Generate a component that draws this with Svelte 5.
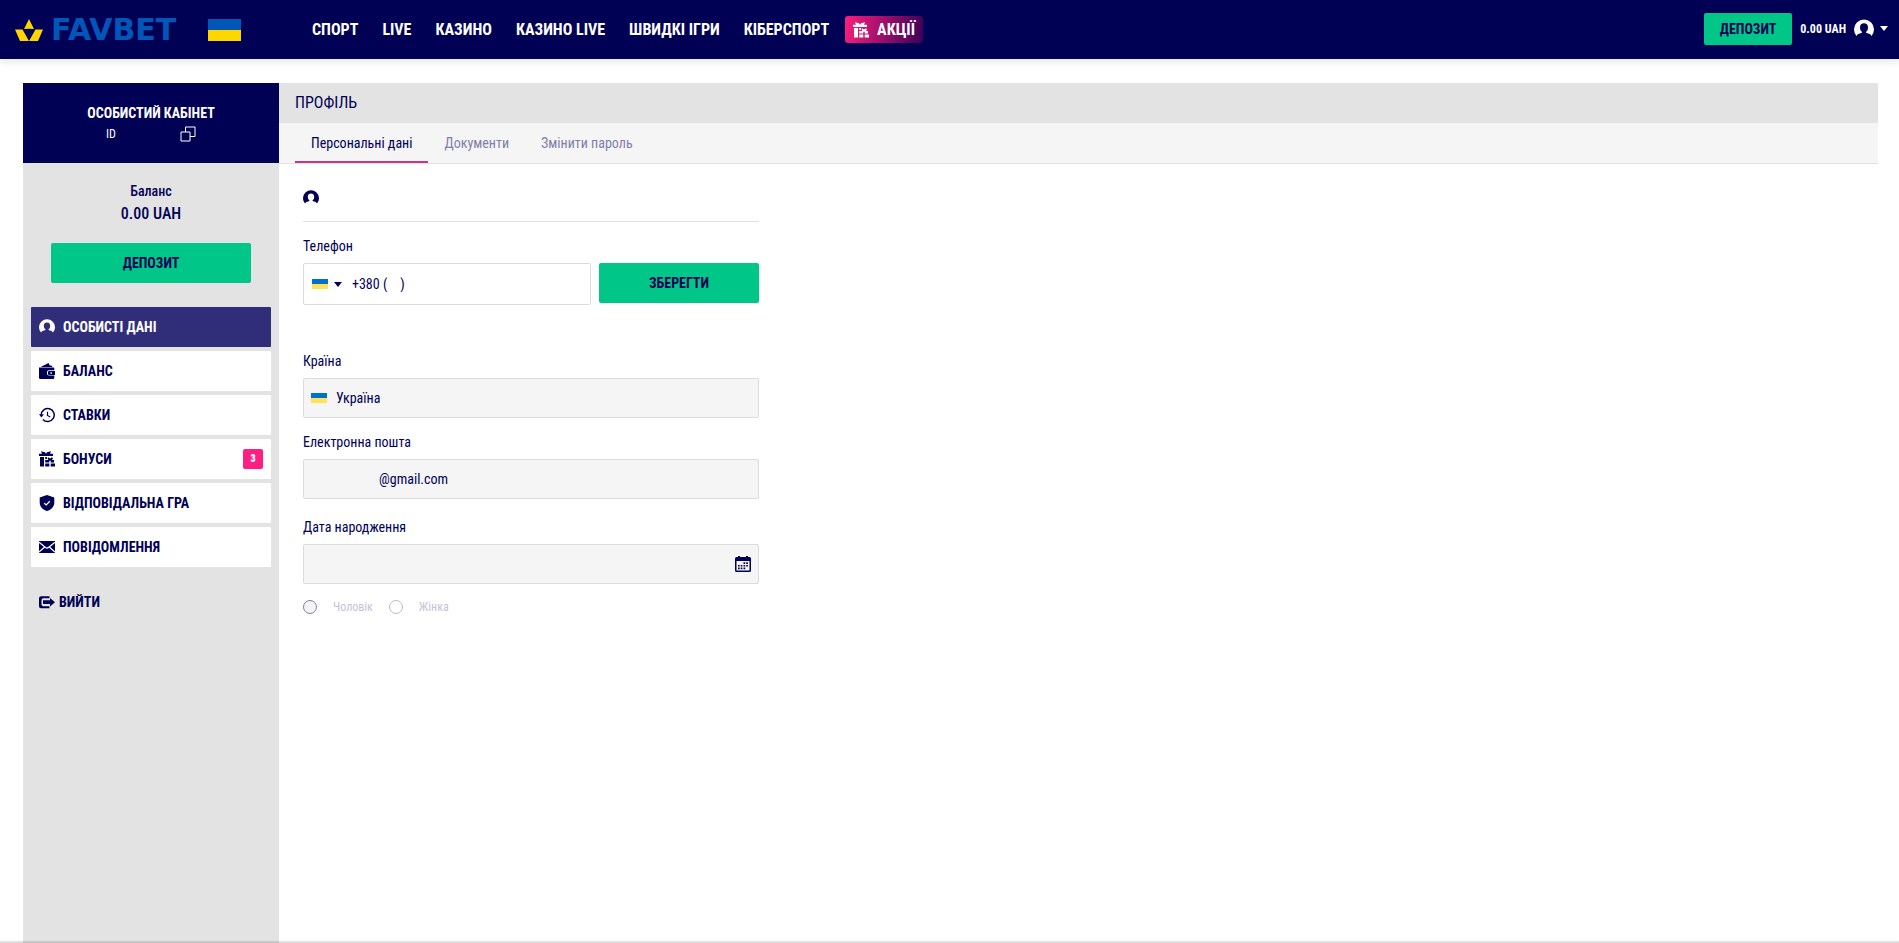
<script>
	let activeTab = 0;
	let activeItem = 0;
	let phone = '+380 (    )';
	let country = 'Україна';
	let email = '@gmail.com';
	let birthday = '';

	const navigation = ['СПОРТ', 'LIVE', 'КАЗИНО', 'КАЗИНО LIVE', 'ШВИДКІ ІГРИ', 'КІБЕРСПОРТ'];
	const tabs = ['Персональні дані', 'Документи', 'Змінити пароль'];
	const menu = [
		{ icon: 'user', label: 'ОСОБИСТІ ДАНІ' },
		{ icon: 'wallet', label: 'БАЛАНС' },
		{ icon: 'history', label: 'СТАВКИ' },
		{ icon: 'gift', label: 'БОНУСИ', count: 3 },
		{ icon: 'shield', label: 'ВІДПОВІДАЛЬНА ГРА' },
		{ icon: 'mail', label: 'ПОВІДОМЛЕННЯ' }
	];
</script>

{#snippet icon(name)}
	<svg class="icon" viewBox="0 0 16 16" fill="currentColor" aria-hidden="true">
		{#if name === 'user'}
			<path d="M2 13.600A8 8 0 1 1 14 13.600L13.200 12.400Q12.500 11.700 10 11.200L9.400 10.300C10.600 9.600 11.200 8.300 11.200 6.700C11.200 4.600 9.900 3.400 8 3.400S4.800 4.600 4.800 6.700C4.800 8.300 5.400 9.600 6.600 10.300L6 11.200Q3.500 11.700 2.800 12.400z" />
		{:else if name === 'wallet'}
			<path d="M3 3.200 9.500 0l1.300 2.600h1.700l1 1.500H2z" />
			<path d="M0 4.500h14.500q.8 0 .8.800v2H10q-2 0-2 1.800v1.600q0 1.800 2 1.800h5.300v2.200q0 1.300-1.300 1.300H1.300Q0 16 0 14.700z" />
			<path fill-rule="evenodd" d="M10.200 8H16v4h-5.800Q9 12 9 10.900V9.100Q9 8 10.200 8zm1.200 1.200v1.500h1.500V9.200z" />
		{:else if name === 'history'}
			<path d="M2.200 8a6.500 6.500 0 1 1 1.700 4.400" fill="none" stroke="currentColor" stroke-width="1.500" />
			<path d="M0 7.300h4.900L2.400 10.500z" />
			<path d="M8.500 4.700v3.700l2.700 1.500" fill="none" stroke="currentColor" stroke-width="1.200" />
		{:else if name === 'gift'}
			<path d="M2 .3 6 1.300 7 2.800 8 1.300l4-1-1 2.500h3V5H0V2.800h3z" />
			<path d="M1 6h4v9.500H1zM6.200 6H8v2H6.200zM9.200 6.200l1.800 1.300L13 6.200l1 1.600-1.200 1.300H15v2.300h-3.300V9.800h-1.400v1.600H6.200V9.100h3.200L8.600 7.800zM6.200 12.400h4.100v3.100H6.200zM11.700 12.400H16v3.100h-4.300z" />
		{:else if name === 'shield'}
			<path d="M8 0 15.300 2.400v5.300C15.300 12 12.200 14.600 8 16 3.800 14.600.7 12 .7 7.700V2.400z" />
			<path class="cut" d="m5.300 8.200 1.900 1.700 3.600-3.600" />
		{:else if name === 'mail'}
			<path d="M0 2h16v12H0z" />
			<path class="cut" d="M0 3.200 6.500 8.500Q8 9.500 9.500 8.500L16 3.200M0 13l5.700-4.900M16 13l-5.700-4.900" />
		{:else if name === 'exit'}
			<path d="M10.500 4.200V2.200H2Q0 2.200 0 4.200v8q0 2 2 2h8.500v-2H4.500Q2.500 12.200 2.500 10.400V6Q2.500 4.200 4.500 4.200z" />
			<path d="M4 6.300h7V4l5 4.200-5 4.200V10H4z" />
		{:else if name === 'calendar'}
			<path fill-rule="evenodd" d="M3 0h2v1h6V0h2v1h1.500Q16 1 16 2.500v12q0 1.500-1.500 1.500h-13Q0 16 0 14.500v-12Q0 1 1.500 1H3zM1.500 5v9.500h13V5z" />
			<path d="M8.500 6.200h1.700v1.700H8.500zM11.200 6.200h1.700v1.700h-1.700zM3 8.900h1.700v1.700H3zM5.700 8.900h1.700v1.700H5.700zM8.500 8.900h1.700v1.700H8.500zM11.200 8.900h1.700v1.700h-1.700zM3 11.600h1.700v1.700H3zM5.700 11.600h1.700v1.700H5.700zM8.500 11.600h1.700v1.700H8.500z" />
		{:else if name === 'copy'}
			<path d="M1 6h9v9H1zM5.500 6V1H15v9.500h-5" fill="none" stroke="currentColor" />
		{/if}
	</svg>
{/snippet}

{#snippet caret()}
	<svg class="caret" viewBox="0 0 8 5" fill="currentColor" aria-hidden="true"><path d="M0 0h8L4 5z" /></svg>
{/snippet}

<div class="page">
	<header>
		<a class="logo" href="#home">
			<svg class="star" viewBox="0 0 28 22" fill="#ffd500" aria-hidden="true">
				<path d="M14 0 19 10Q14 9.500 9 10zM0 10.500h7.500L14 22H5zM28 10.500h-7.500L14 22h9z" />
			</svg>
			<span>FAVBET</span>
			<i class="flag big"></i>
		</a>
		<nav>
			{#each navigation as label}
				<a href="#section">{label}</a>
			{/each}
			<a class="promo" href="#promo">{@render icon('gift')}АКЦІЇ</a>
		</nav>
		<div class="account">
			<button class="green small">ДЕПОЗИТ</button>
			<strong>0.00 UAH</strong>
			<button class="plain profile" aria-label="Профіль">
				{@render icon('user')}
				{@render caret()}
			</button>
		</div>
	</header>

	<div class="columns">
		<aside>
			<div class="cabinet">
				<strong>ОСОБИСТИЙ КАБІНЕТ</strong>
				<div class="user-id">
					<span>ID</span>
					<button class="plain" aria-label="Копіювати ID">{@render icon('copy')}</button>
				</div>
			</div>
			<div class="balance">
				<span>Баланс</span>
				<strong>0.00 UAH</strong>
				<button class="green">ДЕПОЗИТ</button>
			</div>
			<nav class="menu">
				{#each menu as item, i}
					<button class:active={i === activeItem} on:click={() => (activeItem = i)}>
						{@render icon(item.icon)}
						<span>{item.label}</span>
						{#if item.count}
							<b class="badge">{item.count}</b>
						{/if}
					</button>
				{/each}
			</nav>
			<button class="plain exit">{@render icon('exit')}ВИЙТИ</button>
		</aside>

		<main>
			<h1>ПРОФІЛЬ</h1>
			<div class="tabs" role="tablist">
				{#each tabs as tab, i}
					<button role="tab" aria-selected={i === activeTab} class:active={i === activeTab} on:click={() => (activeTab = i)}>
						{tab}
					</button>
				{/each}
			</div>
			<form on:submit|preventDefault>
				<div class="section-head">{@render icon('user')}</div>

				<label for="phone">Телефон</label>
				<div class="phone-row">
					<div class="field phone">
						<button type="button" class="plain code" aria-label="Код країни">
							<i class="flag"></i>
							{@render caret()}
						</button>
						<input id="phone" type="tel" bind:value={phone} />
					</div>
					<button class="green save">ЗБЕРЕГТИ</button>
				</div>

				<label for="country">Країна</label>
				<div class="field locked country">
					<i class="flag"></i>
					<input id="country" readonly bind:value={country} />
				</div>

				<label for="email">Електронна пошта</label>
				<div class="field locked email">
					<input id="email" readonly bind:value={email} />
				</div>

				<label for="birthday">Дата народження</label>
				<div class="field locked birthday">
					<input id="birthday" readonly bind:value={birthday} />
					{@render icon('calendar')}
				</div>

				<div class="gender">
					<label><input type="radio" name="gender" value="m" disabled />Чоловік</label>
					<label><input type="radio" name="gender" value="f" disabled />Жінка</label>
				</div>
			</form>
		</main>
	</div>
	<div class="bottom-shadow"></div>
</div>

<style>
	:global(body) {
		background: #fff;
	}

	.page {
		min-height: 100vh;
		display: flex;
		flex-direction: column;
		position: relative;
		color: #000055;
		font-family: 'Roboto Condensed', 'Liberation Sans Narrow', Roboto, sans-serif;
		font-size: 14px;
		line-height: 20px;
	}

	.page :global(*) {
		box-sizing: border-box;
	}

	button,
	input {
		font: inherit;
		color: inherit;
	}

	button {
		border: 0;
		padding: 0;
		cursor: pointer;
	}

	a {
		color: inherit;
		text-decoration: none;
	}

	.icon {
		width: 16px;
		height: 16px;
		flex: none;
		display: block;
	}

	.cut {
		fill: none;
		stroke: #fff;
		stroke-width: 1.3;
	}

	.caret {
		width: 8px;
		height: 5px;
		display: block;
	}

	.plain {
		display: flex;
		align-items: center;
		background: none;
	}

	.green {
		height: 40px;
		border-radius: 2px;
		background: #00c787;
		color: #000055;
		font-weight: 700;
	}

	.flag {
		width: 16px;
		height: 10px;
		flex: none;
		background: linear-gradient(#0072ce 50%, #ffe15a 50%);
	}

	.flag.big {
		width: 33px;
		height: 22px;
		margin-left: auto;
		background: linear-gradient(#0057b8 50%, #ffd500 50%);
	}

	header {
		display: flex;
		align-items: center;
		height: 59px;
		padding: 0 11px 0 15px;
		color: #fff;
		background: #000055;
		box-shadow: 0 4px 6px rgba(0, 0, 50, 0.08);
	}

	.logo {
		display: flex;
		align-items: center;
		width: 226px;
		margin-right: 71px;
		color: #0057b8;
		font: 700 30px 'DejaVu Sans', sans-serif;
	}

	.star {
		width: 28px;
		height: 22px;
		margin-right: 8px;
	}

	header nav {
		display: flex;
		align-items: center;
		gap: 24px;
		font-size: 16px;
		font-weight: 700;
	}

	.promo {
		display: flex;
		align-items: center;
		gap: 8px;
		height: 27px;
		margin-left: -8px;
		padding: 0 8px;
		border-radius: 3px;
		background: linear-gradient(100deg, #fc1e7d, #3a0057);
	}

	.account {
		display: flex;
		align-items: center;
		gap: 8px;
		margin-left: auto;
		padding-bottom: 2px;
		font-size: 12px;
	}

	.small {
		height: 32px;
		padding: 0 16px;
		font-size: 14px;
	}

	.profile {
		gap: 6px;
	}

	.profile .icon {
		width: 20px;
		height: 20px;
	}

	.columns {
		flex: 1;
		display: flex;
		padding: 24px 21px 0 23px;
	}

	aside {
		width: 256px;
		flex: none;
		background: #e3e3e3;
	}

	.cabinet {
		height: 80px;
		padding-top: 20px;
		text-align: center;
		color: #fff;
		background: #000055;
	}

	.user-id {
		display: flex;
		justify-content: center;
		gap: 64px;
		font-size: 12px;
		line-height: 22px;
	}

	.balance {
		display: flex;
		flex-direction: column;
		align-items: center;
		padding: 18px 28px 24px;
		font-weight: 500;
	}

	.balance strong {
		font-size: 16px;
		line-height: 26px;
		font-weight: 500;
	}

	.balance .green {
		align-self: stretch;
		margin-top: 16px;
	}

	.menu {
		display: flex;
		flex-direction: column;
		gap: 4px;
		padding: 0 8px;
	}

	.menu button {
		display: flex;
		align-items: center;
		gap: 8px;
		height: 40px;
		padding: 0 8px;
		border-radius: 1px;
		background: #fff;
		font-weight: 700;
	}

	.menu .active {
		color: #fff;
		background: #302e79;
	}

	.badge {
		width: 20px;
		margin-left: auto;
		border-radius: 2px;
		color: #fff;
		background: #ff1e82;
		font-size: 10px;
	}

	.exit {
		gap: 4px;
		margin: 25px 16px;
		font-weight: 700;
	}

	main {
		flex: 1;
		min-width: 0;
	}

	h1 {
		margin: 0;
		padding: 0 16px;
		font-size: 16px;
		font-weight: 400;
		line-height: 40px;
		background: #e3e3e3;
	}

	.tabs {
		display: flex;
		height: 41px;
		padding: 0 16px;
		border-bottom: 1px solid #e3e3e3;
		background: #f5f5f5;
	}

	.tabs button {
		padding: 2px 16px 0;
		border-bottom: 2px solid transparent;
		background: none;
		color: #7f7faa;
	}

	.tabs .active {
		color: #000055;
		border-color: #d0347f;
	}

	form {
		width: 456px;
		margin-left: 24px;
	}

	.section-head {
		height: 58px;
		padding-top: 26px;
		border-bottom: 1px solid #e0e0e0;
	}

	form > label {
		display: block;
		margin: 14px 0 7px;
	}

	.phone-row {
		display: flex;
		gap: 8px;
		margin-bottom: 46px;
	}

	.field {
		display: flex;
		align-items: center;
		height: 40px;
		padding: 0 7px;
		border: 1px solid #dcdcdc;
		border-radius: 2px;
	}

	.locked {
		background: #f5f5f5;
	}

	.field input {
		flex: 1;
		min-width: 0;
		padding: 0;
		border: 0;
		outline: 0;
		background: none;
	}

	.phone {
		flex: 1;
		height: 42px;
		gap: 10px;
		padding: 0 8px;
	}

	.code {
		gap: 6px;
	}

	.save {
		width: 160px;
	}

	.country {
		gap: 9px;
	}

	.email {
		margin-bottom: 18px;
		padding-left: 75px;
	}

	.gender {
		display: flex;
		gap: 16px;
		margin-top: 13px;
		color: #c3c3d8;
		font-size: 12px;
	}

	.gender label {
		display: flex;
		align-items: center;
		gap: 16px;
	}

	.gender input {
		width: 14px;
		height: 14px;
		margin: 0;
		appearance: none;
		border: 1px solid #b9b9d2;
		border-radius: 50%;
		background: #fff;
	}

	.gender label:first-child input {
		border-color: #7f7faa;
		background: #f5f5f5;
	}

	.bottom-shadow {
		position: absolute;
		left: 0;
		right: 0;
		bottom: 0;
		height: 3px;
		background: linear-gradient(transparent, rgba(0, 0, 0, 0.18));
	}
</style>
